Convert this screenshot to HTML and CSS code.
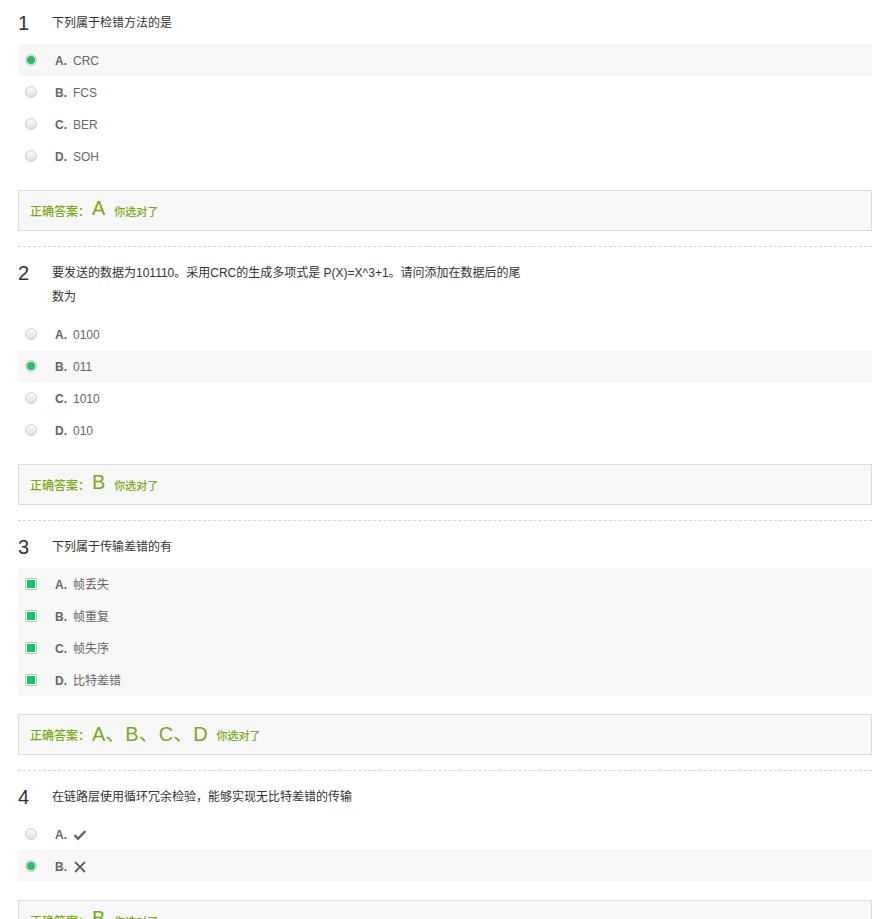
FILE: index.html
```html
<!DOCTYPE html>
<html lang="zh">
<head>
<meta charset="utf-8">
<title>作业</title>
<link rel="stylesheet" href="styles.css">
</head>
<body>
<div class="page">

  <div class="q">
    <div class="q-title"><span class="q-num">1</span><div class="q-text">下列属于检错方法的是</div></div>
    <ul class="opts">
      <li class="opt on"><span class="radio checked"></span><b>A.</b><span class="opt-text">CRC</span></li>
      <li class="opt"><span class="radio"></span><b>B.</b><span class="opt-text">FCS</span></li>
      <li class="opt"><span class="radio"></span><b>C.</b><span class="opt-text">BER</span></li>
      <li class="opt"><span class="radio"></span><b>D.</b><span class="opt-text">SOH</span></li>
    </ul>
    <div class="ans"><span class="ans-label">正确答案：</span><span class="ans-key">A</span><span class="ans-ok">你选对了</span></div>
  </div>

  <div class="q">
    <div class="q-title"><span class="q-num">2</span><div class="q-text">要发送的数据为101110。采用CRC的生成多项式是 P(X)=X^3+1。请问添加在数据后的尾<br>数为</div></div>
    <ul class="opts">
      <li class="opt"><span class="radio"></span><b>A.</b><span class="opt-text">0100</span></li>
      <li class="opt on"><span class="radio checked"></span><b>B.</b><span class="opt-text">011</span></li>
      <li class="opt"><span class="radio"></span><b>C.</b><span class="opt-text">1010</span></li>
      <li class="opt"><span class="radio"></span><b>D.</b><span class="opt-text">010</span></li>
    </ul>
    <div class="ans"><span class="ans-label">正确答案：</span><span class="ans-key">B</span><span class="ans-ok">你选对了</span></div>
  </div>

  <div class="q">
    <div class="q-title"><span class="q-num">3</span><div class="q-text">下列属于传输差错的有</div></div>
    <ul class="opts">
      <li class="opt on"><span class="check checked"></span><b>A.</b><span class="opt-text">帧丢失</span></li>
      <li class="opt on"><span class="check checked"></span><b>B.</b><span class="opt-text">帧重复</span></li>
      <li class="opt on"><span class="check checked"></span><b>C.</b><span class="opt-text">帧失序</span></li>
      <li class="opt on"><span class="check checked"></span><b>D.</b><span class="opt-text">比特差错</span></li>
    </ul>
    <div class="ans"><span class="ans-label">正确答案：</span><span class="ans-key">A、B、C、D</span><span class="ans-ok">你选对了</span></div>
  </div>

  <div class="q">
    <div class="q-title"><span class="q-num">4</span><div class="q-text">在链路层使用循环冗余检验，能够实现无比特差错的传输</div></div>
    <ul class="opts">
      <li class="opt"><span class="radio"></span><b>A.</b><span class="opt-text"><svg class="ico" width="14" height="12" viewBox="0 0 14 12"><path d="M1.5 6.2 L5 9.7 L12.5 2.2" fill="none" stroke="#666" stroke-width="2.4"/></svg></span></li>
      <li class="opt on"><span class="radio checked"></span><b>B.</b><span class="opt-text"><svg class="ico" width="14" height="14" viewBox="0 0 14 14"><path d="M2 2 L12 12 M12 2 L2 12" fill="none" stroke="#666" stroke-width="2"/></svg></span></li>
    </ul>
    <div class="ans"><span class="ans-label">正确答案：</span><span class="ans-key">B</span><span class="ans-ok">你选对了</span></div>
  </div>

</div>
</body>
</html>
```

FILE: styles.css
```css
html, body {
  margin: 0;
  padding: 0;
  background: #fff;
}
body {
  font-family: "Liberation Sans", "Noto Sans CJK SC", Arial, sans-serif;
  font-size: 12px;
  color: #333;
}
.page {
  padding: 0 3px 0 18px;
}
.q {
  padding: 14px 0 15px;
  border-bottom: 1px dashed #d4d4d4;
}
.q:first-child {
  padding-top: 11px;
}
.q-title {
  display: flex;
  align-items: flex-start;
}
.q-num {
  width: 34px;
  flex: none;
  font-family: "Liberation Sans", sans-serif;
  font-size: 20px;
  line-height: 24px;
  color: #333;
}
.q-text {
  line-height: 24px;
  color: #333;
}
.opts {
  list-style: none;
  margin: 9px 0 0;
  padding: 0;
}
.opt {
  height: 32px;
  line-height: 32px;
  padding-left: 7px;
  color: #666;
  white-space: nowrap;
}
.opt.on {
  background: #f7f7f7;
}
.opt b {
  margin-left: 18px;
  font-weight: bold;
  color: #666;
  vertical-align: middle;
}
.opt-text {
  margin-left: 6px;
  vertical-align: middle;
}
.ico {
  vertical-align: middle;
  position: relative;
  top: -1px;
}
.radio {
  display: inline-block;
  vertical-align: middle;
  width: 12px;
  height: 12px;
  box-sizing: border-box;
  border-radius: 50%;
  border: 1px solid #cfcfcf;
  background: linear-gradient(#fdfdfd, #dedede);
  position: relative;
  top: -1px;
}
.radio.checked {
  border-color: #c8c8c8;
  background: #e4e4e4;
}
.radio.checked::after {
  content: "";
  position: absolute;
  left: 1px;
  top: 1px;
  width: 8px;
  height: 8px;
  border-radius: 50%;
  background: #1cc55a;
}
.check {
  display: inline-block;
  vertical-align: middle;
  width: 12px;
  height: 12px;
  box-sizing: border-box;
  border: 1px solid #c4c4c4;
  background: #fff;
  position: relative;
  top: -1px;
}
.check.checked::after {
  content: "";
  position: absolute;
  left: 1px;
  top: 1px;
  width: 8px;
  height: 8px;
  background: #00c85a;
}
.ans {
  margin-top: 18px;
  height: 41px;
  box-sizing: border-box;
  border: 1px solid #dcdcdc;
  background: #f7f7f7;
  padding-left: 11px;
  display: flex;
  align-items: center;
  color: #7aa915;
  white-space: nowrap;
}
.ans-label {
  font-size: 12px;
  font-weight: 500;
}
.ans-key {
  font-family: "Liberation Sans", "Noto Sans CJK SC", sans-serif;
  font-size: 20px;
  margin-left: 2px;
  margin-right: 9px;
  position: relative;
  top: -2px;
}
.ans-ok {
  font-size: 11px;
  font-weight: 500;
}
```
